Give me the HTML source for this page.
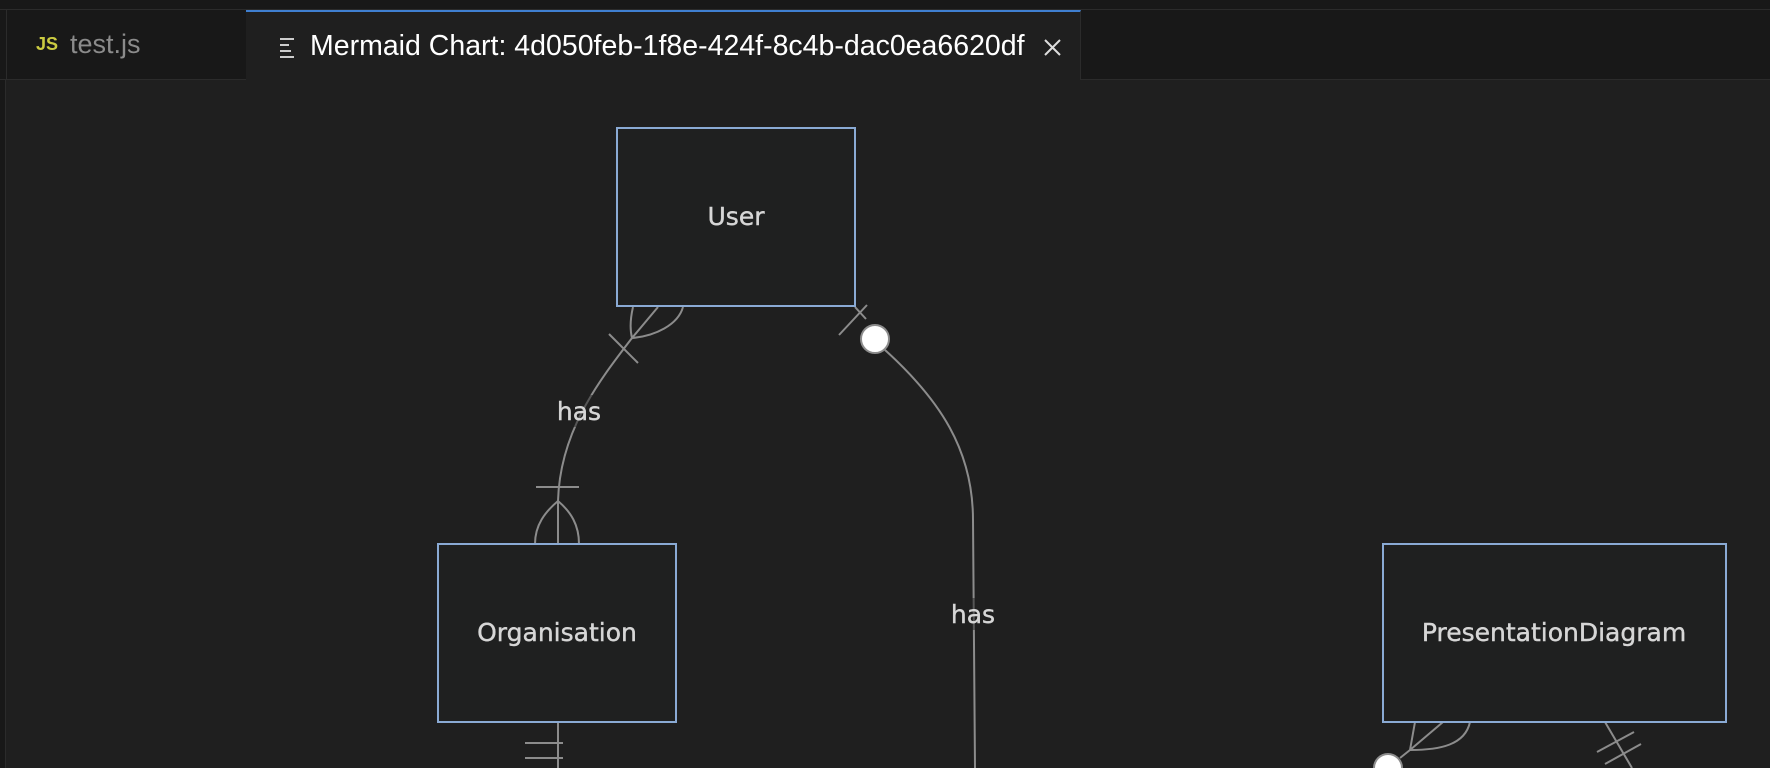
<!DOCTYPE html>
<html><head><meta charset="utf-8"><style>
html,body{margin:0;padding:0;width:1770px;height:768px;overflow:hidden;background:#1f1f1f;font-family:"Liberation Sans",sans-serif}
.top{position:absolute;left:0;top:0;width:1770px;height:9px;background:#181818;border-bottom:1px solid #2b2b2b}
.tabbar{position:absolute;left:0;top:10px;width:1770px;height:69px;background:#181818;border-bottom:1px solid #2b2b2b}
.tab1{position:absolute;left:6px;top:10px;width:239px;height:69px;background:#181818;border-right:1px solid #2b2b2b;border-left:1px solid #2b2b2b}
.tab2{position:absolute;left:246px;top:10px;width:835px;height:70px;background:#1f1f1f;border-top:2px solid #3f7fd0;border-right:1px solid #2b2b2b;box-sizing:border-box}
.lstrip{position:absolute;left:0;top:80px;width:5px;height:688px;background:#181818;border-right:1px solid #2b2b2b}
svg{position:absolute;left:0;top:0}
</style></head><body>
<div class="top"></div>
<div class="tabbar"></div>
<div class="tab1"><span style="position:absolute;left:29px;top:24px;color:#cbcb41;font-weight:bold;font-size:18px">JS</span><span style="position:absolute;left:63px;top:19px;color:#8b8b8b;font-size:27px">test.js</span></div>
<div class="tab2">
<svg width="20" height="22" style="left:34px;top:25px"><g fill="#cccccc"><rect x="0" y="1" width="14" height="2"/><rect x="0" y="7" width="9" height="2"/><rect x="0" y="13" width="11" height="2"/><rect x="0" y="19" width="14" height="2"/></g></svg>
<span style="position:absolute;left:64px;top:18px;color:#ffffff;font-size:28.5px;white-space:nowrap">Mermaid Chart: 4d050feb-1f8e-424f-8c4b-dac0ea6620df</span>
<svg width="20" height="20" style="left:797px;top:26px"><path d="M2 2L17 17M17 2L2 17" stroke="#ddd" stroke-width="2"/></svg>
</div>
<div class="lstrip"></div>
<svg width="1770" height="768" viewBox="0 0 1770 768" style="top:0">
<g fill="none" stroke="#8c8c8c" stroke-width="2">
<path d="M632 338 C600 380 560 430 558 501"/>
<path d="M633 307 C630 320 630 330 632 338 L658 307 M632 338 C655 336 678 325 683 307"/>
<path d="M609 334 L638 363"/>
<path d="M536 487 L579 487"/>
<path d="M558 501 L558 544 M558 501 C545 512 535 525 535 544 M558 501 C571 512 579 525 579 544"/>
<path d="M855 307 L866 319"/>
<path d="M839 335 L867 305"/>
<path d="M885 350 C940 400 973 450 973 520 L975 768"/>
<path d="M558 722 L558 768 M525 743 L563 743 M525 758 L563 758"/>
<path d="M1410 750 L1415 722 M1410 750 L1443 722 M1410 750 C1440 750 1465 745 1470 722 M1400 758 L1410 750"/>
<path d="M1605 722 L1632 768 M1597 752 L1634 732 M1605 764 L1641 744"/>
</g>
<circle cx="875" cy="339" r="14" fill="#fff" stroke="#8c8c8c" stroke-width="2"/>
<circle cx="1388" cy="768" r="14" fill="#fff" stroke="#8c8c8c" stroke-width="2"/>
<g fill="#1f2020" stroke="#8aaad4" stroke-width="2">
<rect x="617" y="128" width="238" height="178"/>
<rect x="438" y="544" width="238" height="178"/>
<rect x="1383" y="544" width="343" height="178"/>
</g>
<rect x="556" y="395" width="46" height="32" fill="#1f1f1f" opacity="0.5"/>
<rect x="950" y="598" width="46" height="32" fill="#1f1f1f" opacity="0.5"/>
<g fill="#d6d6d6" font-family="DejaVu Sans, sans-serif" font-size="25" text-anchor="middle" stroke="#d6d6d6" stroke-width="0.4">
<text x="736" y="225">User</text>
<text x="557" y="641">Organisation</text>
<text x="1554" y="641">PresentationDiagram</text>
<text x="579" y="420">has</text>
<text x="973" y="623">has</text>
</g>
</svg>
</body></html>
